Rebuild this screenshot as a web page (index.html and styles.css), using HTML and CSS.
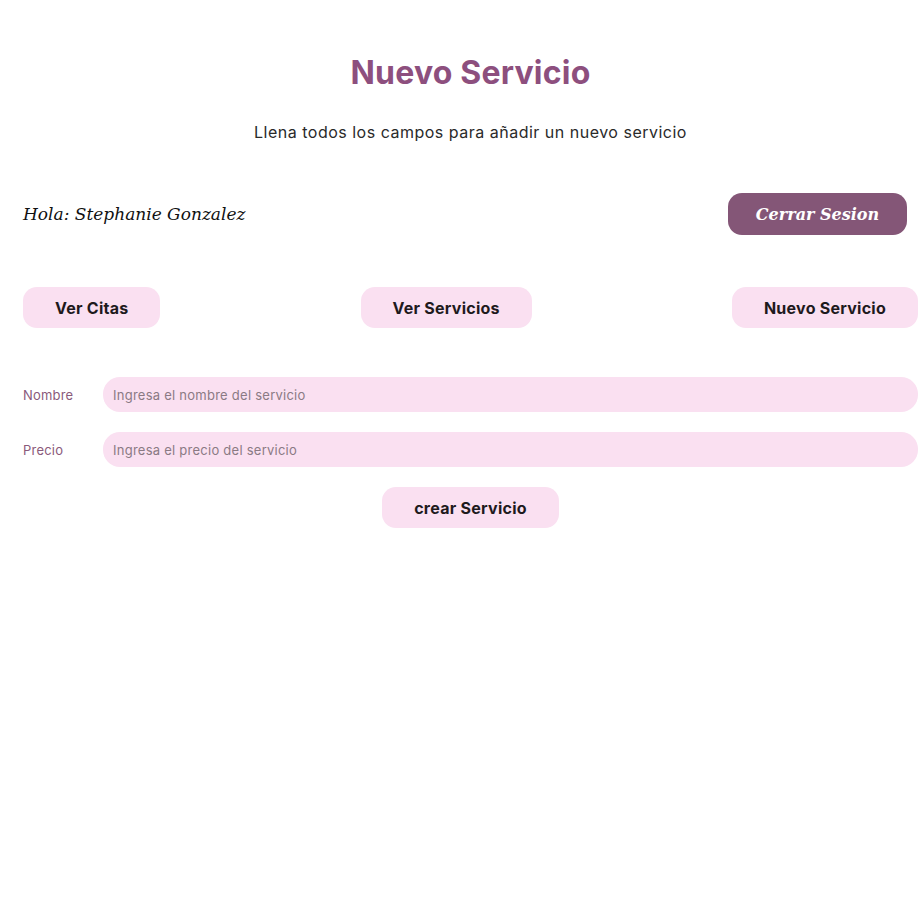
FILE: index.html
```html
<!DOCTYPE html>
<html lang="es">
<head>
<meta charset="utf-8">
<title>Nuevo Servicio</title>
<link rel="stylesheet" href="styles.css">
</head>
<body>
<main class="page">
  <h1 class="title">Nuevo Servicio</h1>
  <p class="subtitle">Llena todos los campos para añadir un nuevo servicio</p>

  <div class="session">
    <p class="hola">Hola: Stephanie Gonzalez</p>
    <button class="logout">Cerrar Sesion</button>
  </div>

  <nav class="nav">
    <a class="nav-btn" href="#">Ver Citas</a>
    <a class="nav-btn" href="#">Ver Servicios</a>
    <a class="nav-btn" href="#">Nuevo Servicio</a>
  </nav>

  <form class="form">
    <div class="field">
      <label class="label" for="nombre">Nombre</label>
      <input class="input" id="nombre" type="text" placeholder="Ingresa el nombre del servicio">
    </div>
    <div class="field">
      <label class="label" for="precio">Precio</label>
      <input class="input" id="precio" type="text" placeholder="Ingresa el precio del servicio">
    </div>
    <div class="submit-row">
      <button class="submit" type="button">crear Servicio</button>
    </div>
  </form>
</main>
</body>
</html>
```

FILE: styles.css
```css
* { box-sizing: border-box; }
html, body { margin: 0; padding: 0; background: #fff; }
body { font-family: "Inter", "Open Sans", sans-serif; color: #222; }

.page {
  padding: 54px 0 0 23px;
  width: 918px;
}

.title {
  margin: 0;
  text-align: center;
  font-size: 32px;
  font-weight: 700;
  line-height: 38px;
  color: #8d4f7e;
  letter-spacing: 0.2px;
}

.subtitle {
  margin: 29px 0 0;
  text-align: center;
  font-size: 16px;
  line-height: 22px;
  color: #2a2a2a;
  letter-spacing: 0.5px;
}

.session {
  margin-top: 50px;
  display: flex;
  justify-content: space-between;
  align-items: center;
  padding-right: 11px;
}

.hola {
  margin: 0;
  font-family: "DejaVu Serif", "Liberation Serif", serif;
  font-style: italic;
  font-size: 17px;
  color: #111;
}

.logout {
  width: 179px;
  height: 42px;
  border: none;
  border-radius: 14px;
  background: #845677;
  color: #fff;
  font-family: "DejaVu Serif", "Liberation Serif", serif;
  font-style: italic;
  font-weight: 700;
  font-size: 16px;
}

.nav {
  margin-top: 52px;
  display: flex;
  justify-content: space-between;
}

.nav-btn {
  display: flex;
  align-items: center;
  justify-content: center;
  height: 41px;
  padding: 0 32px;
  border-radius: 14px;
  background: #fae0f1;
  color: #1e1a1d;
  font-weight: 700;
  font-size: 16px;
  letter-spacing: 0.25px;
  text-decoration: none;
}

.form {
  margin-top: 49px;
  display: flex;
  flex-direction: column;
  gap: 20px;
}

.field {
  display: flex;
  align-items: center;
}

.label {
  width: 80px;
  font-size: 13px;
  color: #8a5a7b;
  letter-spacing: 0.2px;
}

.input {
  flex: 1;
  height: 35px;
  border: none;
  border-radius: 17px;
  background: #fae0f1;
  padding: 0 10px;
  font-family: "Inter", "Open Sans", sans-serif;
  font-size: 13px;
  letter-spacing: 0.25px;
  color: #333;
  outline: none;
}

.input::placeholder { color: #8a7a84; }

.submit-row {
  display: flex;
  justify-content: center;
}

.submit {
  width: 177px;
  height: 41px;
  border: none;
  border-radius: 14px;
  background: #fae0f1;
  color: #1e1a1d;
  font-family: "Inter", "Open Sans", sans-serif;
  font-weight: 700;
  font-size: 16px;
  letter-spacing: 0.25px;
}
```
